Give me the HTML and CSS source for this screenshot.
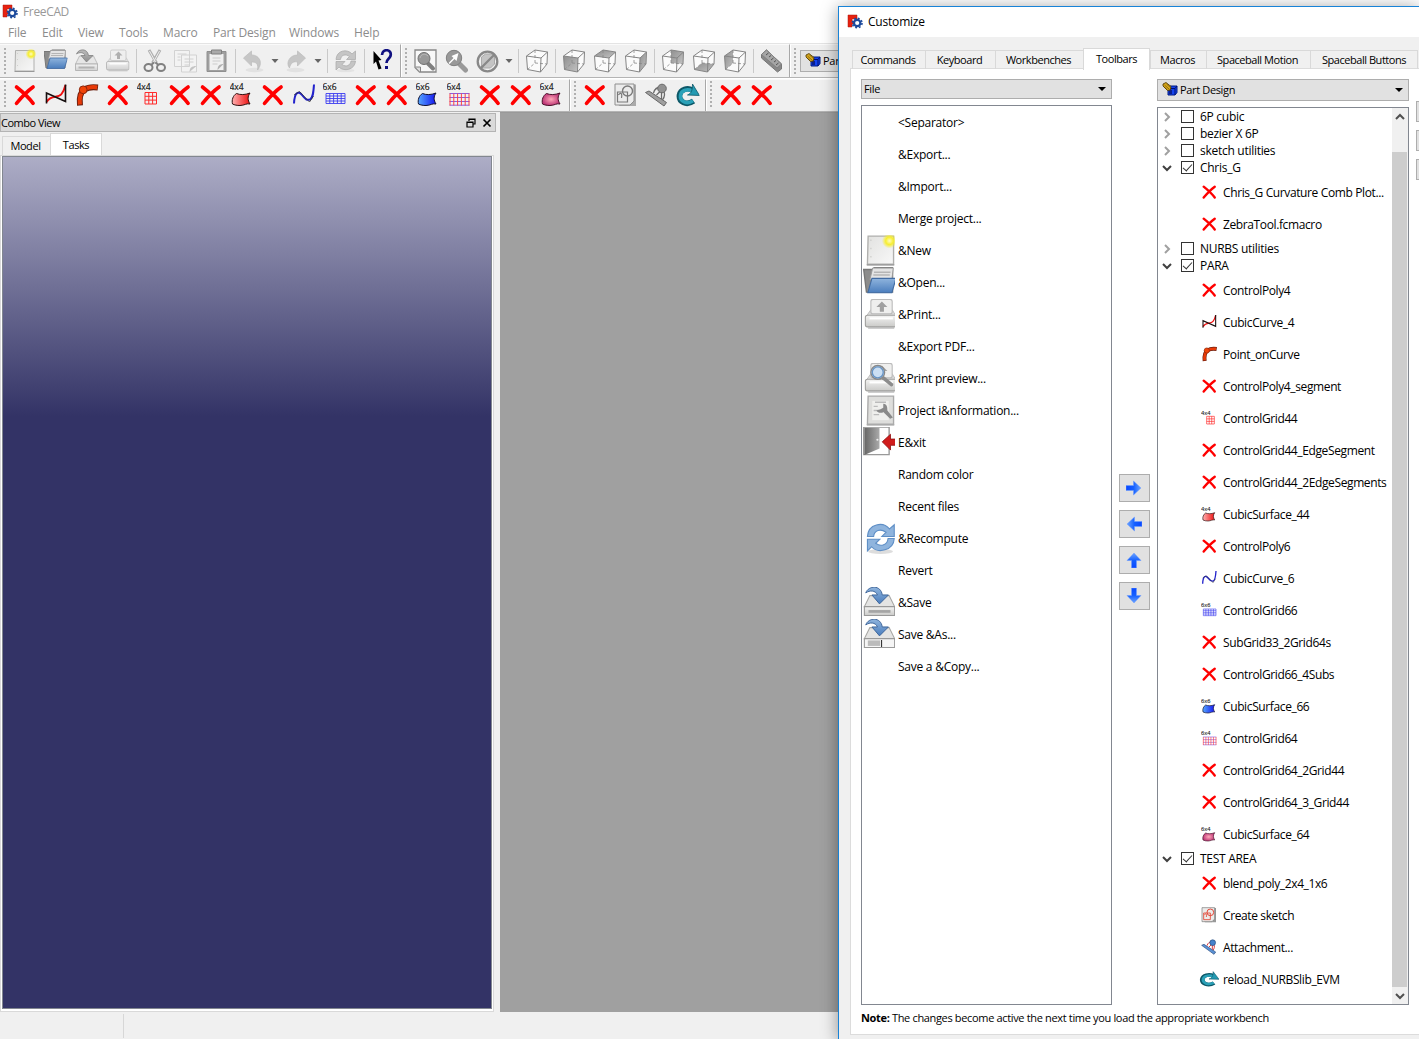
FILE: index.html
```html
<!DOCTYPE html>
<html lang="en">
<head>
<meta charset="utf-8">
<title>FreeCAD</title>
<link rel="stylesheet" href="styles.css">
</head>
<body>
<svg class="sprite" aria-hidden="true">
  <defs>
    <linearGradient id="g-gray" x1="0" y1="0" x2="0" y2="1"><stop offset="0" stop-color="#f4f4f3"/><stop offset="1" stop-color="#cacac8"/></linearGradient>
    <linearGradient id="g-page" x1="0" y1="0" x2="1" y2="1"><stop offset="0" stop-color="#e2e2e0"/><stop offset="1" stop-color="#f8f8f8"/></linearGradient>
    <linearGradient id="g-face" x1="0" y1="0" x2="1" y2="1"><stop offset="0" stop-color="#8f8f8f"/><stop offset="1" stop-color="#c2c2c2"/></linearGradient>
    <linearGradient id="g-blue" x1="0" y1="0" x2="0" y2="1"><stop offset="0" stop-color="#8fb4dd"/><stop offset="1" stop-color="#4a7dbd"/></linearGradient>
    <linearGradient id="g-red" x1="0" y1="0" x2="1" y2="0"><stop offset="0" stop-color="#ffb0b0"/><stop offset="1" stop-color="#ee1010"/></linearGradient>
    <linearGradient id="g-surfblue" x1="0" y1="0" x2="1" y2="0"><stop offset="0" stop-color="#56a8ff"/><stop offset="1" stop-color="#1414f0"/></linearGradient>
    <radialGradient id="g-pink"><stop offset="0" stop-color="#ffa8b8"/><stop offset="1" stop-color="#c03878"/></radialGradient>
    <linearGradient id="g-arrow" x1="0" y1="0" x2="1" y2="0"><stop offset="0" stop-color="#0a48ff"/><stop offset=".5" stop-color="#1560ff"/><stop offset="1" stop-color="#6ca4ff"/></linearGradient>
    <radialGradient id="g-sun"><stop offset="0" stop-color="#fffcc0"/><stop offset=".5" stop-color="#f7ee30"/><stop offset="1" stop-color="#f7ee30" stop-opacity="0"/></radialGradient>
    <linearGradient id="g-door" x1="0" y1="0" x2="1" y2="0"><stop offset="0" stop-color="#666"/><stop offset="1" stop-color="#aaa"/></linearGradient>
  </defs>

  <symbol id="logo" viewBox="0 0 16 16">
    <path d="M1 1h9v4H5v2h4v3H5v3H1z" fill="#e8210f" stroke="#a51a10" stroke-width=".5"/>
    <circle cx="10.2" cy="9" r="3.2" fill="#fff" stroke="#1c4a9c" stroke-width="2.2"/>
    <circle cx="10.2" cy="9" r="4.800" fill="none" stroke="#1c4a9c" stroke-width="1.600" stroke-dasharray="1.900 1.870"/>
  </symbol>
  <symbol id="bench" viewBox="0 0 16 16">
    <path d="M6 6l2-2h7v6.500l-2 2.500H6z" fill="#1443ee" stroke="#001a80"/>
    <path d="M6 6.500h7v6.500M13 6.500l2-2.500" stroke="#001070" fill="none"/><path d="M7 8h3v4H7z" fill="#0a1f90"/>
    <path d="M1 2l3-1.500 5 4-.5 3.500-3 .5-4.500-4.500z" fill="#d8a91c" stroke="#4a3200" stroke-width=".8"/>
    <path d="M2.500 3l5 4.500M1.500 4.500l4 3.500M4.500 2l4 3.500" stroke="#604400" stroke-width=".6"/>
  </symbol>

  <symbol id="x" viewBox="0 0 24 24"><path d="M4 4C9 8 17 15.500 20.600 20.300M20.600 4C15 8 8 15.500 4 20.300" fill="none" stroke="#f00" stroke-width="3.600" stroke-linecap="round"/></symbol>
  <symbol id="curve4" viewBox="0 0 24 24"><path d="M3 19C8 11 14 16 18 11c2-2.500 3-5 4-9" fill="none" stroke="#f01010" stroke-width="2"/><path d="M3 20.500V10l19 8.500V1.500" fill="none" stroke="#181010" stroke-width="1.600"/></symbol>
  <symbol id="point" viewBox="0 0 24 24"><g fill="none" stroke-linecap="butt"><path d="M5.500 22.500C4.500 14 6 9 10 6.500 13 4.500 17 3.500 23.500 4.500" stroke="#6b2010" stroke-width="6"/><path d="M5.400 21.500C4.700 14 6 9 10 6.500 13 4.500 17 3.500 22.700 4.400" stroke="#e83a08" stroke-width="4"/></g><circle cx="8.700" cy="6.800" r="3.900" fill="#f04408" stroke="#8c2408"/></symbol>
  <symbol id="grid44" viewBox="0 0 24 24"><text class="tag" x="0" y="7">4x4</text><path d="M8.500 9.500h11.500v11.500H8.500zM12.300 9.500v11.500M16.100 9.500v11.500M8.500 13.300h11.500M8.500 17.100h11.500" fill="none" stroke="#ff2a2a"/></symbol>
  <symbol id="grid66" viewBox="0 0 24 24"><text class="tag" x="0" y="7">6x6</text><path d="M3.500 10.500h19v10h-19zM7.300 10.500v10M11.100 10.500v10M14.900 10.500v10M18.700 10.500v10M3.500 13h19M3.500 15.500h19M3.500 18h19" fill="none" stroke="#3c3cf0" stroke-width=".9"/></symbol>
  <symbol id="grid64" viewBox="0 0 24 24"><text class="tag" x="0" y="7">6x4</text><path d="M3 10.500h20M3 14.500h20M3 18.500h20M3 22.200h20" stroke="#8a5ce0"/><path d="M3.500 10.500v12M7.300 10.500v12M11.100 10.500v12M14.900 10.500v12M18.700 10.500v12M22.500 10.500v12" stroke="#f44"/></symbol>
  <symbol id="surf44" viewBox="0 0 24 24"><text class="tag" x="0" y="7">4x4</text><path d="M7 10.500c3.500 1.500 8.500 1.500 13.500-.5-2.500 3.500-2.500 7 0 11-3-1-6 1.500-10 1.500-3 0-5.500-.5-7.500-1.500C2 17 3.500 12.500 7 10.500z" fill="url(#g-red)" stroke="#301010"/></symbol>
  <symbol id="surf66" viewBox="0 0 24 24"><text class="tag" x="0" y="7">6x6</text><path d="M7 10.500c3.500 1.500 8.500 1.500 13.500-.5-2.500 3.500-2.500 7 0 11-3-1-6 1.500-10 1.500-3 0-5.500-.5-7.500-1.500C2 17 3.500 12.500 7 10.500z" fill="url(#g-surfblue)" stroke="#101030"/></symbol>
  <symbol id="surf64" viewBox="0 0 24 24"><text class="tag" x="0" y="7">6x4</text><path d="M7 10.500c3.500 1.500 8.500 1.500 13.500-.5-2.500 3.500-2.500 7 0 11-3-1-6 1.500-10 1.500-3 0-5.500-.5-7.500-1.500C2 17 3.500 12.500 7 10.500z" fill="url(#g-pink)" stroke="#481028"/></symbol>
  <symbol id="curve6" viewBox="0 0 24 24"><path d="M2.500 20.500C3 9 7 7.500 10.500 12s5 5.500 8 4.500C21.500 15 22 9 22.500 1.500" fill="none" stroke="#2222cc" stroke-width="2"/><path d="M2.500 12l5.500-3.500L18 19l4-6" fill="none" stroke="#333" stroke-width=".8"/></symbol>

  <symbol id="new" viewBox="0 0 24 24"><path d="M3 1.500h18.500v20.500H2.500z" fill="url(#g-page)" stroke="#b0b0ae"/><path d="M2 22.500h20" stroke="#999"/><path d="M5 4v16" stroke="#d0d0ce" stroke-dasharray="1 5"/><circle cx="18.500" cy="5" r="5.500" fill="url(#g-sun)"/></symbol>
  <symbol id="open" viewBox="0 0 24 24"><path d="M.5 2.500h6l2-1.500h13v18H2.500z" fill="#8c8c8c" stroke="#777"/><path d="M7 1.500h15l-1 8.500H5z" fill="#e4e4e4" stroke="#999" stroke-width=".7"/><path d="M8 4.500h12M7.500 6.500h12" stroke="#b5b5b5"/><path d="M6.500 9H24l-3 10.500H3.500z" fill="url(#g-blue)" stroke="#426ca3" stroke-width=".8"/></symbol>
  <symbol id="save" viewBox="0 0 24 24"><path d="M5 7h14l4 8H1z" fill="#e4e4e3" stroke="#a5a5a3" stroke-width=".8"/><path d="M1 15h22v6.500H1z" fill="url(#g-gray)" stroke="#999" stroke-width=".8"/><path d="M4 18.500h16" stroke="#a5a5a5" stroke-width="2"/><path d="M2 5C4-.5 13-1 14 6.500h4.500L12 13 6.500 6.500h4C9 3 5 3 2 5z" fill="url(#g-blue)" stroke="#3c6499" stroke-width=".7"/></symbol>
  <symbol id="saveas" viewBox="0 0 24 24"><path d="M5 7h14l4 8H1z" fill="#e4e4e3" stroke="#a5a5a3" stroke-width=".8"/><path d="M1 15h22v6.500H1z" fill="#f5f5f5" stroke="#999" stroke-width=".8"/><path d="M3.500 18.300h9" stroke="#bbb" stroke-width="4"/><path d="M13.500 16v5" stroke="#333" stroke-width=".8"/><path d="M2 5C4-.5 13-1 14 6.500h4.500L12 13 6.500 6.500h4C9 3 5 3 2 5z" fill="url(#g-blue)" stroke="#3c6499" stroke-width=".7"/></symbol>
  <symbol id="print" viewBox="0 0 24 24"><path d="M5 8.500L1.500 13.500h22l-3-5z" fill="#dadad9" stroke="#b5b5b5" stroke-width=".6"/><rect x="5" y="1" width="15.500" height="10.500" rx="1.500" fill="#efefee" stroke="#bbb" stroke-width=".8"/><path d="M13 2.500l4 4h-2.500v3.500h-3V6.500H9z" fill="#a0a0a0"/><rect x="1" y="12.500" width="22.500" height="8.500" rx="1.500" fill="url(#g-gray)" stroke="#a0a09e" stroke-width=".8"/><path d="M4 14.800h17" stroke="#fff" stroke-width="1.500"/><path d="M3 21.800h19" stroke="#b5b5b5"/></symbol>
  <symbol id="preview" viewBox="0 0 24 24"><use href="#print" width="24" height="24"/><path d="M14 11.500l6 5" stroke="#8c8c8c" stroke-width="2.600" stroke-linecap="round"/><circle cx="10" cy="7.500" r="5" fill="#cbdff3" stroke="#888" stroke-width="1"/><circle cx="10" cy="7.500" r="4" fill="none" stroke="#6794c5"/></symbol>
  <symbol id="info" viewBox="0 0 24 24"><path d="M3 1.500h18.500v20.500H2.500z" fill="#dededc" stroke="#aaa"/><path d="M6 5h12v14H6z" fill="#efefed"/><path d="M8 6h8M7 9h3M7 12h4M7 15h4" stroke="#bbb"/><path d="M9 12c1 2 4 2 5 1l5 5 2-1-4-5c0-2 0-5-3-5v3l-2 1z" fill="#8a8a8a"/><path d="M2 22.500h20" stroke="#aaa"/></symbol>
  <symbol id="exit" viewBox="0 0 24 24"><path d="M.5.800h18.500v20H.5z" fill="#fff" stroke="#999"/><path d="M1 1.300h11v15L1 21z" fill="url(#g-door)"/><circle cx="10.500" cy="10" r=".8" fill="#eee"/><path d="M14 11.500l6-5.500V9.500h5v4.500h-5v3.500z" fill="#d01c1c" stroke="#901010" stroke-width=".6"/></symbol>
  <symbol id="refresh" viewBox="0 0 24 24"><ellipse cx="12" cy="21.500" rx="9" ry="1.800" fill="#ddd"/><path d="M2.500 10.500C3 1 14-.5 18.500 5L22 2v8.500h-9l3-3C12 4.500 7.500 6 7 10.500z" fill="#8fb4dd" stroke="#5f8fc6" stroke-width=".8"/><path d="M22 12c-.5 9-12 11-16.500 6L2.500 21v-8.500h9l-3 3c4 3 8.500 1 9-3.500z" fill="#8fb4dd" stroke="#5f8fc6" stroke-width=".8"/></symbol>
  <symbol id="cut" viewBox="0 0 24 24"><path d="M6.500 1l7.500 13M17.500 1L10 14" stroke="#b0b0b0" stroke-width="3"/><path d="M7 2l6 11M17 2l-6 11" stroke="#eee"/><g fill="none" stroke="#808080" stroke-width="2"><ellipse cx="6" cy="18.500" rx="4" ry="3.500"/><ellipse cx="18.500" cy="18.500" rx="4" ry="3.500"/><path d="M8.500 16l3-2.500M16 16l-3-2.500"/></g></symbol>
  <symbol id="copy" viewBox="0 0 24 24"><g fill="#f3f3f3" stroke="#d2d2d2"><path d="M1 1.500h15v16H1zM8 6h15v17H8z"/></g><path d="M4 5h9M4 8h3M4 11h3M11 10h9M11 13h9M11 16h5" stroke="#d0d0d0"/><path d="M16 23c0-4 2-6 7-6z" fill="#c4c4c4"/></symbol>
  <symbol id="paste" viewBox="0 0 24 24"><path d="M2.500 2.500h19v20h-19z" fill="#a0a0a0" stroke="#909090"/><path d="M5 5h14v16H5z" fill="#f0f0f0"/><path d="M7 1h10v4H7z" fill="#aaa" stroke="#808080"/><path d="M8 9h8M8 12h8M8 15h5" stroke="#ccc"/><path d="M13 21c0-4 2-6 6-6z" fill="#b0b0b0"/></symbol>
  <symbol id="undo" viewBox="0 0 24 24"><ellipse cx="13" cy="21" rx="9" ry="2.200" fill="#e2e2e2"/><path d="M2 9l8-7v4c8 0 12 8 6 15 1-6-1-8-6-8v4z" fill="#c6c6c6" stroke="#bbb" stroke-width=".7"/></symbol>
  <symbol id="redo" viewBox="0 0 24 24"><ellipse cx="11" cy="21" rx="9" ry="2.200" fill="#e2e2e2"/><path d="M21 9l-8-7v4C5 6 1 14 5 19c1-5 4-7 8-6v4z" fill="#c6c6c6" stroke="#bbb" stroke-width=".7"/></symbol>
  <symbol id="whats" viewBox="0 0 24 24"><path d="M3 2l8 9-3 .5 3 8-3 1-2.500-8L3 15z" fill="#000"/><path d="M11.500 6C11.500-1 22 0 20 7c-1 3-4 3-4 7" fill="none" stroke="#101080" stroke-width="2.700"/><path d="M14.500 17h3v3h-3z" fill="#101080"/></symbol>
  <symbol id="fit" viewBox="0 0 24 24"><path d="M1.500 1h21v22H6l-4.500-4.500z" fill="#f8f8f8" stroke="#888" stroke-width="1.300"/><path d="M2 18h5v5" fill="#ddd" stroke="#888"/><path d="M14.500 14.500l5 5" stroke="#808080" stroke-width="4" stroke-linecap="round"/><circle cx="10.500" cy="9.500" r="6" fill="#999" stroke="#707070"/><path d="M6.500 9c1-4 5-5 8-2" stroke="#bbb" fill="none"/></symbol>
  <symbol id="fitsel" viewBox="0 0 24 24"><path d="M14 14l7 7" stroke="#999" stroke-width="5" stroke-linecap="round"/><circle cx="9.500" cy="9" r="7.700" fill="#999" stroke="#808080"/><path d="M4 14l5-5-2-2 7-3-2 8-2-2-5 5z" fill="#fff"/></symbol>
  <symbol id="style" viewBox="0 0 24 24"><path d="M6 8l4-3h9v10l-4 4H6z" fill="#c4c4c4" stroke="#aaa"/><circle cx="12" cy="12.500" r="9.800" fill="none" stroke="#888" stroke-width="2.300"/><path d="M5 19.500L19 5.500" stroke="#888" stroke-width="2.300"/></symbol>
  <symbol id="wire" viewBox="0 0 24 24"><path d="M10.500 1v13L3 20.500M10.500 14l12 1" fill="none" stroke="#888" stroke-dasharray="3 2" stroke-width=".8"/><path d="M2 7l8.500-6L23 3l-6.500 6zM2 7l1 13.500 13 2.500.500-14M16 23l6.500-8L23 3" fill="none" stroke="#858585" stroke-width="1"/></symbol>
  <symbol id="cube" viewBox="0 0 24 24"><path d="M2 7l8.500-6L23 3l-.5 12L16 23 3 20.500z" fill="#fbfbfb"/></symbol>
  <symbol id="iso" viewBox="0 0 24 24"><use href="#cube" width="24" height="24"/><use href="#wire" width="24" height="24"/></symbol>
  <symbol id="front" viewBox="0 0 24 24"><use href="#cube" width="24" height="24"/><path d="M2 7l14.500 2L16 23 3 20.500z" fill="url(#g-face)"/><use href="#wire" width="24" height="24"/></symbol>
  <symbol id="top" viewBox="0 0 24 24"><use href="#cube" width="24" height="24"/><path d="M2 7l8.500-6L23 3l-6.500 6z" fill="url(#g-face)"/><use href="#wire" width="24" height="24"/></symbol>
  <symbol id="right" viewBox="0 0 24 24"><use href="#cube" width="24" height="24"/><path d="M16.500 9L23 3l-.5 12L16 23z" fill="url(#g-face)"/><use href="#wire" width="24" height="24"/></symbol>
  <symbol id="rear" viewBox="0 0 24 24"><use href="#cube" width="24" height="24"/><path d="M10.500 1L23 3l-.5 12-12-1z" fill="url(#g-face)"/><use href="#wire" width="24" height="24"/></symbol>
  <symbol id="bottom" viewBox="0 0 24 24"><use href="#cube" width="24" height="24"/><path d="M3 20.500L16 23l6.500-8-12-1z" fill="url(#g-face)"/><use href="#wire" width="24" height="24"/></symbol>
  <symbol id="left" viewBox="0 0 24 24"><use href="#cube" width="24" height="24"/><path d="M2 7l8.500-6v13L3 20.500z" fill="url(#g-face)"/><use href="#wire" width="24" height="24"/></symbol>
  <symbol id="ruler" viewBox="0 0 24 24"><path d="M2 5.500l5-4.500 15 14v5l-4 3L2 9z" fill="#888" stroke="#777"/><path d="M2 5.500l5-4.500 15 14-4.500 4z" fill="#a5a5a5" stroke="#808080"/><path d="M9 4L6.500 6M11.500 6.500l-2 1.500M14 9l-2.500 2M16.500 11.500l-2 1.500M19 14l-2.500 2" stroke="#555"/></symbol>
  <symbol id="sketch" viewBox="0 0 24 24"><path d="M2 1.500h20.500V23H6l-4-4z" fill="#999"/><path d="M1.500 1h19v17l-4 4h-15z" fill="#ecebea" stroke="#777"/><path d="M4 9h10v10H4zM5 12c2-3 4-2 3 3" fill="none" stroke="#e23a2a" stroke-width="1.200"/><circle cx="14" cy="8" r="5" fill="none" stroke="#e23a2a" stroke-width="1.400"/></symbol>
  <symbol id="attach" viewBox="0 0 24 24"><path d="M9 10c1-4 4-6 8-6M19 8c2 3 1 6-1 9M12 12l5-5v9" fill="none" stroke="#d22" stroke-width="1.300"/><path d="M1 9.500l3.500-1.500L22 19.500 19.500 23z" fill="#5b92d6" stroke="#274a7c"/><circle cx="17.500" cy="5.500" r="4.300" fill="#4782cc" stroke="#274a7c"/></symbol>
  <symbol id="reload" viewBox="0 0 24 24"><path d="M18 18c-7 5-15 1-14-6 1-6 8-7.500 13-5" fill="none" stroke="#0d5868" stroke-width="5.600"/><path d="M17.500 17.800c-6 4-13.500.7-12.500-5.800 1-5 7-6.500 12-4" fill="none" stroke="#2aa1b8" stroke-width="3.600"/><path d="M17 1l7 11.500-12-.5c3.500-1.500 5-4 5-11z" fill="#239ab2" stroke="#0d5868" stroke-width=".8"/></symbol>
  <symbol id="arrow" viewBox="0 0 16 16"><path d="M0 5.500h7.500V1l7.500 7-7.500 7v-4.500H0z" fill="url(#g-arrow)" stroke="#6d9cff" stroke-width=".5"/></symbol>
  <symbol id="chev" viewBox="0 0 10 10"><path d="M1 3l4 4 4-4" fill="none" stroke="currentColor" stroke-width="2"/></symbol>
</svg>

<div class="app">
  <header class="titlebar"><svg class="i16"><use href="#logo"/></svg><span>FreeCAD</span></header>
  <nav class="menubar"><span>File</span><span>Edit</span><span>View</span><span>Tools</span><span>Macro</span><span>Part Design</span><span>Windows</span><span>Help</span></nav>

  <div class="toolrow">
    <div class="toolbar">
      <i class="grip"></i>
      <svg class="tool"><use href="#new"/></svg><svg class="tool"><use href="#open"/></svg><svg class="tool off light"><use href="#save"/></svg><svg class="tool off light"><use href="#print"/></svg>
      <i class="sep"></i>
      <svg class="tool"><use href="#cut"/></svg><svg class="tool"><use href="#copy"/></svg><svg class="tool"><use href="#paste"/></svg>
      <i class="sep"></i>
      <svg class="tool"><use href="#undo"/></svg><i class="caret"></i><svg class="tool"><use href="#redo"/></svg><i class="caret"></i>
      <i class="sep"></i>
      <svg class="tool off faint"><use href="#refresh"/></svg>
      <i class="sep"></i>
      <svg class="tool"><use href="#whats"/></svg>
    </div>
    <div class="toolbar">
      <i class="grip"></i>
      <svg class="tool"><use href="#fit"/></svg><svg class="tool"><use href="#fitsel"/></svg><svg class="tool"><use href="#style"/></svg><i class="caret"></i>
      <i class="sep"></i>
      <svg class="tool"><use href="#iso"/></svg>
      <i class="sep"></i>
      <svg class="tool"><use href="#front"/></svg><svg class="tool"><use href="#top"/></svg><svg class="tool"><use href="#right"/></svg>
      <i class="sep"></i>
      <svg class="tool"><use href="#rear"/></svg><svg class="tool"><use href="#bottom"/></svg><svg class="tool"><use href="#left"/></svg>
      <i class="sep"></i>
      <svg class="tool"><use href="#ruler"/></svg>
    </div>
    <div class="toolbar last">
      <i class="grip"></i>
      <div class="bench-select"><svg class="i16"><use href="#bench"/></svg><span>Part Design</span></div>
    </div>
  </div>

  <div class="toolrow second">
    <div class="toolbar">
      <i class="grip"></i>
      <svg class="tool"><use href="#x"/></svg><svg class="tool"><use href="#curve4"/></svg><svg class="tool"><use href="#point"/></svg><svg class="tool"><use href="#x"/></svg><svg class="tool"><use href="#grid44"/></svg><svg class="tool"><use href="#x"/></svg><svg class="tool"><use href="#x"/></svg><svg class="tool"><use href="#surf44"/></svg><svg class="tool"><use href="#x"/></svg><svg class="tool"><use href="#curve6"/></svg><svg class="tool"><use href="#grid66"/></svg><svg class="tool"><use href="#x"/></svg><svg class="tool"><use href="#x"/></svg><svg class="tool"><use href="#surf66"/></svg><svg class="tool"><use href="#grid64"/></svg><svg class="tool"><use href="#x"/></svg><svg class="tool"><use href="#x"/></svg><svg class="tool"><use href="#surf64"/></svg>
    </div>
    <div class="toolbar">
      <i class="grip"></i>
      <svg class="tool"><use href="#x"/></svg><svg class="tool off light"><use href="#sketch"/></svg><svg class="tool off light"><use href="#attach"/></svg><svg class="tool"><use href="#reload"/></svg>
    </div>
    <div class="toolbar last">
      <i class="grip"></i>
      <svg class="tool"><use href="#x"/></svg><svg class="tool"><use href="#x"/></svg>
    </div>
  </div>

  <main class="workspace">
    <aside class="dock">
      <div class="dock-title"><span>Combo View</span>
        <svg class="dock-btn" viewBox="0 0 10 10"><path d="M3 3V1h6v5H7M1 4h6v5H1zM3 1.500h6M1 4.500h6" fill="none" stroke="#000" stroke-width="1.200"/></svg>
        <svg class="dock-btn" viewBox="0 0 10 10"><path d="M1.500 1.500l7 7M8.500 1.500l-7 7" stroke="#000" stroke-width="1.700"/></svg>
      </div>
      <div class="dock-tabs"><span>Model</span><span class="on">Tasks</span></div>
      <div class="dock-frame"><div class="dock-view"></div></div>
    </aside>
    <section class="mdi"></section>
  </main>
  <footer class="status"><i></i></footer>
</div>

<div class="dialog">
  <header class="dialog-title"><svg class="i16"><use href="#logo"/></svg><span>Customize</span></header>
  <nav class="tabs"><span>Commands</span><span>Keyboard</span><span>Workbenches</span><span class="on">Toolbars</span><span>Macros</span><span>Spaceball Motion</span><span>Spaceball Buttons</span></nav>
  <div class="pane">
    <div class="columns">
      <div class="col-left">
        <div class="combo"><span>File</span><i></i></div>
        <ul class="commands">
          <li><b></b>&lt;Separator&gt;</li>
          <li><b></b>&amp;Export...</li>
          <li><b></b>&amp;Import...</li>
          <li><b></b>Merge project...</li>
          <li><b><svg><use href="#new"/></svg></b>&amp;New</li>
          <li><b><svg class="flush"><use href="#open"/></svg></b>&amp;Open...</li>
          <li><b><svg><use href="#print"/></svg></b>&amp;Print...</li>
          <li><b></b>&amp;Export PDF...</li>
          <li><b><svg><use href="#preview"/></svg></b>&amp;Print preview...</li>
          <li><b><svg><use href="#info"/></svg></b>Project i&amp;nformation...</li>
          <li><b><svg class="flush"><use href="#exit"/></svg></b>E&amp;xit</li>
          <li><b></b>Random color</li>
          <li><b></b>Recent files</li>
          <li><b><svg><use href="#refresh"/></svg></b>&amp;Recompute</li>
          <li><b></b>Revert</li>
          <li><b><svg class="flush"><use href="#save"/></svg></b>&amp;Save</li>
          <li><b><svg class="flush"><use href="#saveas"/></svg></b>Save &amp;As...</li>
          <li><b></b>Save a &amp;Copy...</li>
        </ul>
      </div>
      <div class="movers">
        <button><svg class="i16"><use href="#arrow"/></svg></button>
        <button><svg class="i16 w"><use href="#arrow"/></svg></button>
        <button><svg class="i16 n"><use href="#arrow"/></svg></button>
        <button><svg class="i16 s"><use href="#arrow"/></svg></button>
      </div>
      <div class="col-right">
        <div class="combo tall"><svg class="i16"><use href="#bench"/></svg><span>Part Design</span><i></i></div>
        <div class="tree-box">
          <ul class="tree">
            <li class="group"><svg><use href="#chev"/></svg><em></em>6P cubic</li>
            <li class="group"><svg><use href="#chev"/></svg><em></em>bezier X 6P</li>
            <li class="group"><svg><use href="#chev"/></svg><em></em>sketch utilities</li>
            <li class="group open"><svg><use href="#chev"/></svg><em></em>Chris_G</li>
            <li><svg><use href="#x"/></svg>Chris_G Curvature Comb Plot...</li>
            <li><svg><use href="#x"/></svg>ZebraTool.fcmacro</li>
            <li class="group"><svg><use href="#chev"/></svg><em></em>NURBS utilities</li>
            <li class="group open"><svg><use href="#chev"/></svg><em></em>PARA</li>
            <li><svg><use href="#x"/></svg>ControlPoly4</li>
            <li><svg><use href="#curve4"/></svg>CubicCurve_4</li>
            <li><svg><use href="#point"/></svg>Point_onCurve</li>
            <li><svg><use href="#x"/></svg>ControlPoly4_segment</li>
            <li><svg><use href="#grid44"/></svg>ControlGrid44</li>
            <li><svg><use href="#x"/></svg>ControlGrid44_EdgeSegment</li>
            <li><svg><use href="#x"/></svg>ControlGrid44_2EdgeSegments</li>
            <li><svg><use href="#surf44"/></svg>CubicSurface_44</li>
            <li><svg><use href="#x"/></svg>ControlPoly6</li>
            <li><svg><use href="#curve6"/></svg>CubicCurve_6</li>
            <li><svg><use href="#grid66"/></svg>ControlGrid66</li>
            <li><svg><use href="#x"/></svg>SubGrid33_2Grid64s</li>
            <li><svg><use href="#x"/></svg>ControlGrid66_4Subs</li>
            <li><svg><use href="#surf66"/></svg>CubicSurface_66</li>
            <li><svg><use href="#grid64"/></svg>ControlGrid64</li>
            <li><svg><use href="#x"/></svg>ControlGrid64_2Grid44</li>
            <li><svg><use href="#x"/></svg>ControlGrid64_3_Grid44</li>
            <li><svg><use href="#surf64"/></svg>CubicSurface_64</li>
            <li class="group open"><svg><use href="#chev"/></svg><em></em>TEST AREA</li>
            <li><svg><use href="#x"/></svg>blend_poly_2x4_1x6</li>
            <li><svg><use href="#sketch"/></svg>Create sketch</li>
            <li><svg><use href="#attach"/></svg>Attachment...</li>
            <li class="wide"><svg viewBox="0 0 24 24" preserveAspectRatio="none"><use href="#reload"/></svg>reload_NURBSlib_EVM</li>
          </ul>
          <div class="scroll"><svg class="up"><use href="#chev"/></svg><i></i><svg><use href="#chev"/></svg></div>
        </div>
      </div>
      <div class="side"><button></button><button></button><button></button></div>
    </div>
    <p class="note"><strong>Note:</strong> The changes become active the next time you load the appropriate workbench</p>
  </div>
</div>
</body>
</html>
```
FILE: styles.css
```css
* { box-sizing: border-box; }
html, body { margin: 0; width: 1419px; height: 1039px; overflow: hidden; }
body { position: relative; background: #f0f0f0; color: #000; font: 12px/16px "Open Sans", "Noto Sans", sans-serif; letter-spacing: -0.25px; white-space: nowrap; }
ul { list-style: none; margin: 0; padding: 0; }
svg { display: block; flex: none; }
.sprite { position: absolute; width: 0; height: 0; }
.tag { font: 8.500px "Open Sans", sans-serif; letter-spacing: 0; fill: #111; stroke: #111; stroke-width: .15; }
.i16 { width: 16px; height: 16px; }

.app { display: flex; flex-direction: column; width: 1419px; height: 1039px; }
.titlebar { height: 22px; display: flex; align-items: center; gap: 5px; padding: 1px 0 0 2px; background: #fff; color: #999; letter-spacing: -.35px; }
.menubar { height: 21px; display: grid; grid-template-columns: 34px 36px 41px 44px 50px 76px 65px auto; align-items: center; padding: 1px 0 0 8px; background: #fff; color: #8c8c8c; letter-spacing: -.15px; }

.toolrow { height: 35px; display: flex; border-top: 1px solid #e4e4e4; border-bottom: 1px solid #b4b4b4; }
.toolrow.second { height: 34px; border-top-color: #fff; }
.toolbar { display: flex; align-items: center; padding: 0 2px 0 4px; border-right: 1px solid #a8a8a8; border-left: 1px solid #fff; border-top: 1px solid #fafafa; }
.second .toolbar { padding-bottom: 2px; }
.toolbar:first-child { border-left: 0; }
.toolbar.last { border-right: 0; flex: 1; }
.toolbar:not(:first-child) { padding-left: 3px; }
.grip { width: 5px; height: 27px; background: radial-gradient(circle at 1px 1px, #b0b0b0 1px, transparent 1.5px) 0 0 / 5px 4px; }
.tool { width: 31px; height: 24px; padding: 0 3.5px; }
.off { filter: grayscale(1); }
.faint { opacity: .65; }
.light { opacity: .8; }
.sep { width: 6px; height: 24px; background: linear-gradient(#c9c9c9, #c9c9c9) 3px 0 / 1px 100% no-repeat; }
.caret { width: 12px; height: 4px; background: #666; clip-path: polygon(2.500px 0, 9.500px 0, 6px 4px); }
.bench-select { width: 140px; height: 22px; margin-left: 1px; display: flex; align-items: center; gap: 2px; padding-left: 4px; background: #e1e1e1; border: 1px solid #adadad; font-size: 11px; letter-spacing: -.3px; }

.workspace { flex: 1; min-height: 0; display: flex; }
.dock { width: 500px; padding: 1px 4px 0 0; display: flex; flex-direction: column; }
.dock-title { height: 19px; display: flex; align-items: center; gap: 6px; padding: 0 3px 0 0; background: #dadada; border: 1px solid #b4b4b4; font-size: 11px; letter-spacing: -.5px; }
.dock-title span { flex: 1; padding-top: 1px; }
.dock-btn { width: 10px; height: 10px; }
.dock-tabs { height: 22px; margin-top: 1px; padding-left: 2px; display: flex; align-items: flex-end; font-size: 11px; letter-spacing: -.4px; }
.dock-tabs span { height: 19px; width: 48px; padding-right: 2px; text-align: center; line-height: 18px; background: #f0f0f0; border: 1px solid #d9d9d9; border-bottom: 0; border-right: 0; }
.dock-tabs .on { height: 22px; width: 52px; padding: 0; line-height: 21px; background: #fff; border-right: 1px solid #d9d9d9; }
.dock-frame { height: 857px; width: 494px; background: #fff; border: 1px solid #d9d9d9; padding: 0 1px 2px 1px; }
.dock-view { height: 853px; border: 1px solid #828790; background: linear-gradient(#adadc6, #333366 30.5%); }
.mdi { flex: 1; background: #a0a0a0; border-top: 1px solid #999; }
.status { height: 27px; display: flex; padding: 2px 0 1px 123px; }
.status i { width: 1px; background: #d7d7d7; }

.dialog { position: absolute; left: 838px; top: 6px; width: 581px; height: 1033px; overflow: hidden; background: #f0f0f0; border: solid #1883d7; border-width: 1px 0 0 1px; box-shadow: 0 2px 16px rgba(0,0,0,.4); }
.dialog-title { height: 30px; background: #fff; display: flex; align-items: center; gap: 5px; padding-left: 8px; letter-spacing: -.2px; }
.tabs { height: 32px; padding-left: 13px; display: grid; grid-template-columns: 73px 70px 88px 67px 56px 104px 108px; align-items: end; text-align: center; font-size: 11px; letter-spacing: -.45px; }
.tabs span { height: 19px; line-height: 18px; padding-right: 2px; border: 1px solid #d9d9d9; border-right: 0; border-bottom: 0; }
.tabs .on { height: 22px; line-height: 20px; margin-bottom: -1px; padding-right: 0; background: #fff; border-right: 1px solid #d9d9d9; position: relative; }
.tabs span:last-child { border-right: 1px solid #d9d9d9; padding-right: 0; }
.pane { height: 967px; margin: -1px 0 0 11px; padding: 10px 0 0 10px; background: #fff; border: 1px solid #dcdcdc; border-right: 0; }
.columns { display: flex; height: 926px; }
.columns > div { flex: none; }
.columns > .col-left { width: 251px; }
.combo { height: 20px; display: flex; align-items: center; padding: 0 5px 0 2px; background: #e1e1e1; border: 1px solid #adadad; font-size: 11px; letter-spacing: -.35px; }
.combo.tall { height: 22px; padding-left: 4px; gap: 2px; }
.combo span { flex: 1; }
.combo i { width: 8px; height: 4px; background: #000; clip-path: polygon(0 0, 100% 0, 50% 100%); }
.commands { height: 900px; margin-top: 6px; padding: 1px; border: 1px solid #828790; }
.commands li { height: 32px; display: flex; align-items: center; gap: 3px; }
.commands b { width: 32px; height: 32px; overflow: hidden; }
.commands b svg { width: 33px; height: 33px; margin: -1px 0 0 1px; }
.commands b svg.flush { margin-left: 0; }
.movers { width: 45px; padding: 395px 0 0 7px; display: flex; flex-direction: column; gap: 8px; }
.movers button { width: 31px; height: 28px; padding: 0 1px 0 0; display: grid; place-items: center; background: #e1e1e1; border: 1px solid #adadad; }
.w { transform: rotate(180deg); }
.n { transform: rotate(-90deg); }
.s { transform: rotate(90deg); }
.col-right { width: 252px; }
.tree-box { height: 898px; margin-top: 6px; display: flex; border: 1px solid #828790; }
.tree { flex: 1; overflow: hidden; letter-spacing: -.38px; }
.tree li { height: 32px; display: flex; align-items: center; gap: 6px; padding: 2px 0 0 43px; }
.tree li > svg { width: 16px; height: 16px; margin-top: -2px; }
.tree li.wide > svg { width: 20px; height: 16px; margin: -2px -2px 0; }
.tree li.group { height: 17px; gap: 0; padding: 0 0 0 4px; letter-spacing: -.28px; }
.tree li.group > svg { width: 10px; height: 10px; margin-top: 0; color: #a0a0a0; transform: rotate(-90deg); }
.tree li.open > svg { color: #404040; transform: none; }
.group em { width: 13px; height: 13px; margin: 0 6px 0 9px; background: #fff; border: 1px solid #333; position: relative; }
.open em::after { content: ""; position: absolute; left: 3px; top: 0; width: 4px; height: 8px; border: solid #333; border-width: 0 1.300px 1.300px 0; transform: rotate(42deg); }
.scroll { width: 16px; display: flex; flex-direction: column; align-items: center; padding: 4px 1px 3px 0; background: #f0f0f0; color: #505050; }
.scroll svg { width: 10px; height: 10px; }
.scroll .up { transform: rotate(180deg); }
.scroll i { width: 15px; flex: 1; margin: 30px 0 4px; background: #cdcdcd; }
.side { width: 10px; padding: 22px 0 0 7px; overflow: hidden; display: flex; flex-direction: column; gap: 8px; }
.side button { width: 3px; height: 21px; padding: 0; background: #e1e1e1; border: 1px solid #adadad; border-right: 0; }
.note { margin: 5px 0 0; font-size: 11px; letter-spacing: -.34px; }
```
